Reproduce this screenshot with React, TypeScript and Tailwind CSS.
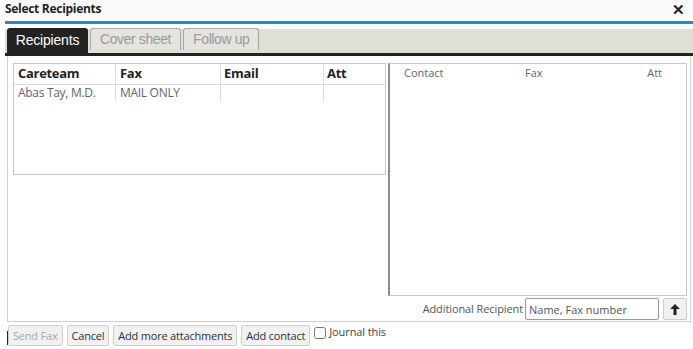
import { useState } from "react"

const font = { fontFamily: '"Open Sans", "Noto Sans", sans-serif' }

function TabButton({ label, active }: { label: string; active?: boolean }) {
  if (active) {
    return (
      <div className="h-[25px] w-[81px] bg-[#222] rounded-t-[3px] flex items-center justify-center text-white text-[14px] tracking-[-0.2px]" style={{ fontFamily: '"Liberation Sans", Arial, sans-serif' }}>
        {label}
      </div>
    )
  }
  return (
    <div className="h-[22px] mb-[3px] px-[9px] bg-[#e4e4de] border border-[#a8a8a8] border-b-0 rounded-t-[3px] flex items-center text-[#9a9a9a] text-[14px] tracking-[-0.4px]" style={{ fontFamily: '"Liberation Sans", Arial, sans-serif' }}>
      {label}
    </div>
  )
}

function Btn({ label, disabled }: { label: string; disabled?: boolean }) {
  return (
    <button
      className={`h-[21px] px-[4px] bg-[#f1f1f1] border border-[#cfcfcf] rounded-[2px] text-[11px] leading-none tracking-[-0.2px] ${disabled ? "text-[#a8a8a8]" : "text-[#333]"}`}
    >
      {label}
    </button>
  )
}

export default function App() {
  const [journal, setJournal] = useState(false)

  return (
    <div className="w-[693px] h-[349px] bg-white overflow-hidden text-[#333]" style={font}>
      {/* title bar */}
      <div className="h-[21px] bg-[#fafafa] flex items-center justify-between pl-[5px] pr-[8px]">
        <span className="text-[12px] font-bold text-[#222] tracking-[-0.3px] -mt-[3px]">Select Recipients</span>
        <span className="text-[15px] font-bold text-[#222] leading-none -mt-[3px]">✕</span>
      </div>
      <div className="ml-[5px] h-[3px] bg-[#1a8fd6]" />

      {/* tabs */}
      <div className="ml-[5px] mt-[5px] h-[27px] bg-[#dfdfd7] border-b-[3px] border-[#222] flex items-end gap-[2px] pl-[2px]">
        <TabButton label="Recipients" active />
        <TabButton label="Cover sheet" />
        <TabButton label="Follow up" />
      </div>

      {/* content */}
      <div className="ml-[7px] w-[684px] h-[266px] border-x border-b border-[#d0d0d0] flex pl-[5px] pt-[7px] gap-[2px]">
        <div className="w-[373px] h-[112px] border border-[#c8c8c8]">
          <div className="flex h-[21px] border-b border-[#dcdcdc] text-[13px] font-bold text-[#222] tracking-[-0.3px]">
            <div className="w-[102px] border-r border-[#dcdcdc] pl-[4px] flex items-center">Careteam</div>
            <div className="w-[105px] border-r border-[#dcdcdc] pl-[4px] flex items-center">Fax</div>
            <div className="w-[103px] border-r border-[#dcdcdc] pl-[3px] flex items-center">Email</div>
            <div className="flex-1 pl-[3px] flex items-center">Att</div>
          </div>
          <div className="flex h-[16px] text-[12px] text-[#666] tracking-[-0.3px]">
            <div className="w-[102px] border-r border-[#dcdcdc] pl-[4px] flex items-center">Abas Tay, M.D.</div>
            <div className="w-[105px] border-r border-[#dcdcdc] pl-[4px] flex items-center">MAIL ONLY</div>
            <div className="w-[103px] border-r border-[#dcdcdc]" />
            <div className="flex-1" />
          </div>
        </div>

        <div className="flex flex-col">
          <div className="w-[299px] h-[233px] border border-[#c8c8c8] border-l-[#8c8c8c] border-l-2">
            <div className="flex text-[11px] text-[#666] pt-[1px]">
              <div className="w-[121px] pl-[14px]">Contact</div>
              <div className="w-[120px] pl-[14px]">Fax</div>
              <div className="flex-1 text-right pr-[24px]">Att</div>
            </div>
          </div>
          <div className="mt-[2px] flex items-center justify-end gap-[4px]">
            <span className="text-[11px] text-[#555] mr-[-2px] tracking-[-0.1px]">Additional Recipient</span>
            <input
              placeholder="Name, Fax number"
              className="w-[134px] h-[22px] border border-[#999] rounded-[2px] px-[3px] text-[11px] placeholder:text-[#555] outline-none"
            />
            <div className="w-[24px] h-[22px] bg-[#f1f1f1] border border-[#cfcfcf] rounded-[2px] flex items-center justify-center">
              <svg width="10" height="11" viewBox="0 0 10 11">
                <path d="M5 0 L10 5 L6.5 5 L6.5 11 L3.5 11 L3.5 5 L0 5 Z" fill="#222" />
              </svg>
            </div>
          </div>
        </div>
      </div>

      {/* footer */}
      <div className="flex items-center mt-[3px] pl-[7px] gap-[4px]">
        <div className="w-px h-[14px] bg-[#222] -mr-[4px] mt-[4px]" />
        <Btn label="Send Fax" disabled />
        <Btn label="Cancel" />
        <Btn label="Add more attachments" />
        <Btn label="Add contact" />
        <label className="flex items-center gap-[3px] text-[11px] text-[#444] -mt-[6px] tracking-[-0.1px]">
          <input
            type="checkbox"
            checked={journal}
            onChange={e => setJournal(e.target.checked)}
            className="w-[12px] h-[12px] m-0"
          />
          Journal this
        </label>
      </div>
    </div>
  )
}
